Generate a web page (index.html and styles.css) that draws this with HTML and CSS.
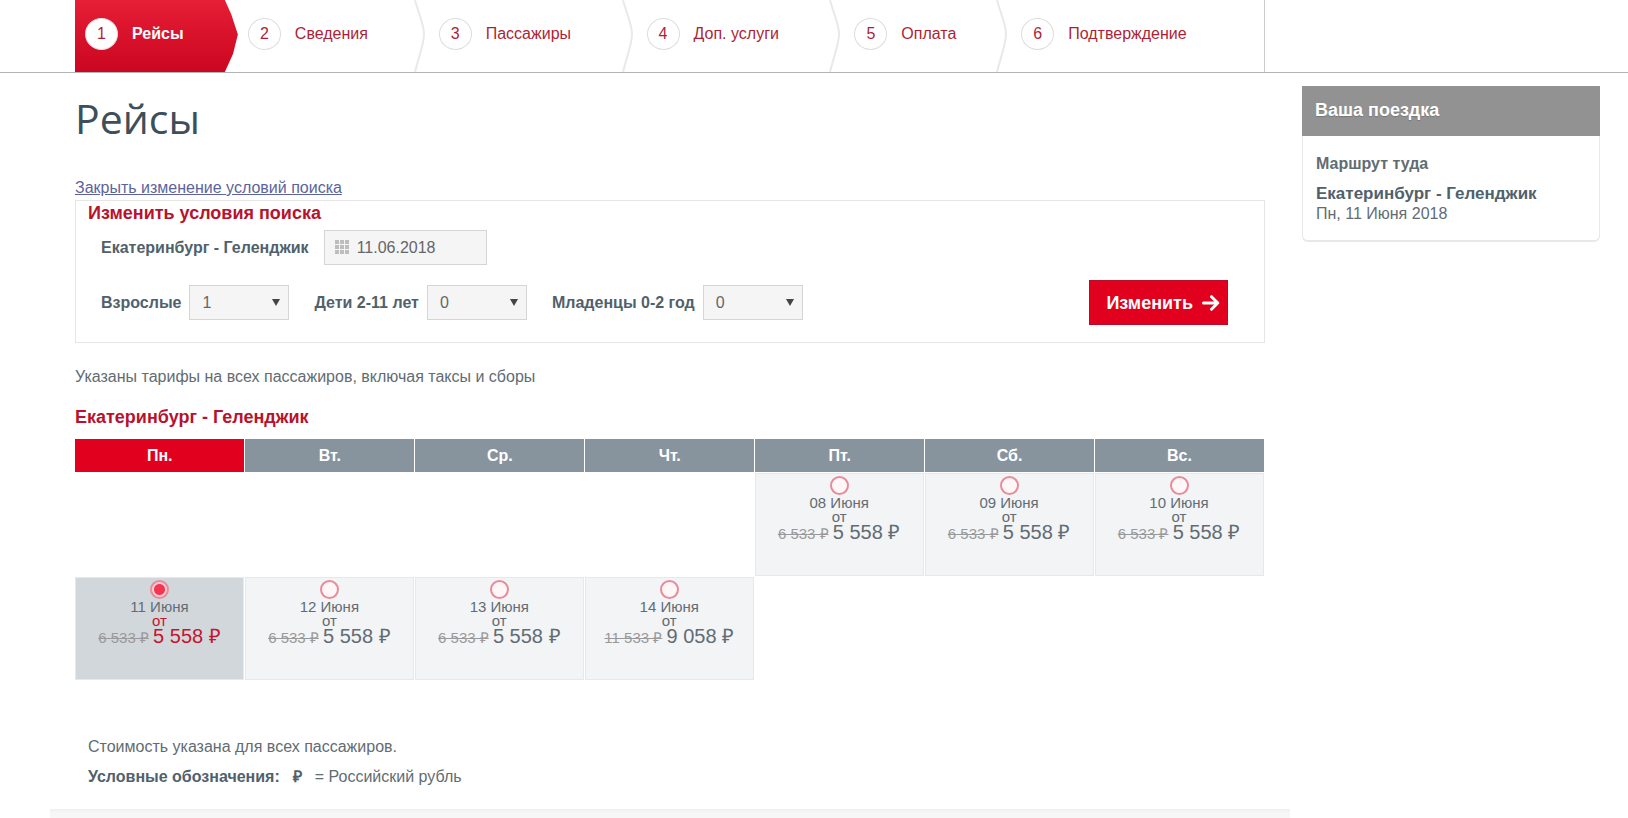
FILE: index.html
```html
<!DOCTYPE html>
<html lang="ru">
<head>
<meta charset="utf-8">
<meta name="viewport" content="width=device-width, initial-scale=1">
<title>Рейсы</title>
<link rel="stylesheet" href="styles.css">
</head>
<body>
<header class="topbar">
  <ol class="steps">
    <li class="step step-active"><span class="step-num">1</span><span class="step-name">Рейсы</span></li>
    <li class="step"><span class="step-num">2</span><span class="step-name">Сведения</span><svg class="chevron" viewBox="0 0 12 72" preserveAspectRatio="none"><path d="M1 0C4 12 10 24 10 34S5 56 1 72"/></svg></li>
    <li class="step step-later"><span class="step-num">3</span><span class="step-name">Пассажиры</span><svg class="chevron" viewBox="0 0 12 72" preserveAspectRatio="none"><path d="M1 0C4 12 10 24 10 34S5 56 1 72"/></svg></li>
    <li class="step step-later"><span class="step-num">4</span><span class="step-name">Доп. услуги</span><svg class="chevron" viewBox="0 0 12 72" preserveAspectRatio="none"><path d="M1 0C4 12 10 24 10 34S5 56 1 72"/></svg></li>
    <li class="step step-later"><span class="step-num">5</span><span class="step-name">Оплата</span><svg class="chevron" viewBox="0 0 12 72" preserveAspectRatio="none"><path d="M1 0C4 12 10 24 10 34S5 56 1 72"/></svg></li>
    <li class="step step-later"><span class="step-num">6</span><span class="step-name">Подтверждение</span></li>
  </ol>
</header>
<div class="page">
  <main class="content">
    <h1 class="title">Рейсы</h1>
    <a class="toggle" href="#search">Закрыть изменение условий поиска</a>
    <form class="search" id="search">
      <h2 class="heading search-title">Изменить условия поиска</h2>
      <div class="row">
        <label class="label" for="date">Екатеринбург - Геленджик</label>
        <span class="date-field">
          <svg class="date-icon" viewBox="0 0 14 14"><path d="M0 0h4v4H0zM5 0h4v4H5zM10 0h4v4h-4zM0 5h4v4H0zM5 5h4v4H5zM10 5h4v4h-4zM0 10h4v4H0zM5 10h4v4H5zM10 10h4v4h-4z"/></svg>
          <input class="control date" id="date" type="text" value="11.06.2018">
        </span>
      </div>
      <div class="row row-passengers">
        <div class="group">
          <label class="label" for="adults">Взрослые</label>
          <span class="select-field"><select class="control select" id="adults"><option>1</option><option>2</option><option>3</option></select></span>
        </div>
        <div class="group">
          <label class="label" for="children">Дети 2-11 лет</label>
          <span class="select-field"><select class="control select" id="children"><option>0</option><option>1</option><option>2</option></select></span>
        </div>
        <div class="group">
          <label class="label" for="infants">Младенцы 0-2 год</label>
          <span class="select-field"><select class="control select" id="infants"><option>0</option><option>1</option></select></span>
        </div>
        <button class="submit" type="button">Изменить<svg class="arrow" viewBox="0 0 18 16"><path d="M1.500 8h14M9.500 1.700 15.800 8l-6.300 6.300"/></svg></button>
      </div>
    </form>
    <p class="note">Указаны тарифы на всех пассажиров, включая таксы и сборы</p>
    <h2 class="heading">Екатеринбург - Геленджик</h2>
    <table class="calendar">
      <thead>
        <tr><th class="today">Пн.</th><th>Вт.</th><th>Ср.</th><th>Чт.</th><th>Пт.</th><th>Сб.</th><th>Вс.</th></tr>
      </thead>
      <tbody>
        <tr>
          <td></td><td></td><td></td><td></td>
          <td><label class="day"><input class="radio" type="radio" name="day"><span class="date-text">08 Июня</span><span class="from">от</span><span class="fare"><s class="old">6 533 ₽</s> <span class="price">5 558 ₽</span></span></label></td>
          <td><label class="day"><input class="radio" type="radio" name="day"><span class="date-text">09 Июня</span><span class="from">от</span><span class="fare"><s class="old">6 533 ₽</s> <span class="price">5 558 ₽</span></span></label></td>
          <td><label class="day"><input class="radio" type="radio" name="day"><span class="date-text">10 Июня</span><span class="from">от</span><span class="fare"><s class="old">6 533 ₽</s> <span class="price">5 558 ₽</span></span></label></td>
        </tr>
        <tr>
          <td><label class="day day-selected"><input class="radio" type="radio" name="day" checked><span class="date-text">11 Июня</span><span class="from">от</span><span class="fare"><s class="old">6 533 ₽</s> <span class="price">5 558 ₽</span></span></label></td>
          <td><label class="day"><input class="radio" type="radio" name="day"><span class="date-text">12 Июня</span><span class="from">от</span><span class="fare"><s class="old">6 533 ₽</s> <span class="price">5 558 ₽</span></span></label></td>
          <td><label class="day"><input class="radio" type="radio" name="day"><span class="date-text">13 Июня</span><span class="from">от</span><span class="fare"><s class="old">6 533 ₽</s> <span class="price">5 558 ₽</span></span></label></td>
          <td><label class="day"><input class="radio" type="radio" name="day"><span class="date-text">14 Июня</span><span class="from">от</span><span class="fare"><s class="old">11 533 ₽</s> <span class="price">9 058 ₽</span></span></label></td>
          <td></td><td></td><td></td>
        </tr>
      </tbody>
    </table>
    <div class="legend">
      <p>Стоимость указана для всех пассажиров.</p>
      <p class="legend-row"><strong>Условные обозначения:</strong><strong>₽</strong><span>= Российский рубль</span></p>
    </div>
    <div class="divider"></div>
  </main>
  <aside class="trip">
    <h2 class="trip-head">Ваша поездка</h2>
    <div class="trip-body">
      <h3 class="trip-label">Маршрут туда</h3>
      <p class="trip-route">Екатеринбург - Геленджик</p>
      <p>Пн, 11 Июня 2018</p>
    </div>
  </aside>
</div>
</body>
</html>
```
FILE: styles.css
```css
* { box-sizing: border-box; }
body { margin: 0; background: #fff; color: #626c73; font: 16px/20px "Liberation Sans", Arial, sans-serif; }
h1, h2, h3, p, ol { margin: 0; padding: 0; }

.topbar { padding: 0 363px 0 75px; border-bottom: 1px solid #b4b4b4; }
.steps { display: grid; grid-template-columns: 163fr 188fr 208fr 208fr 167fr 256fr; height: 72px; list-style: none; border-right: 1px solid #ccc; }
.step { position: relative; display: flex; align-items: center; gap: 14px; padding: 0 0 4px 10px; color: #ad1f36; white-space: nowrap; }
.step-later { padding-left: 13px; }
.step-num { display: grid; place-items: center; width: 33px; height: 32px; border: 1px solid #ddd; border-radius: 50%; background: #fff; }
.step-active { background: linear-gradient(#e61e36, #cb0620); clip-path: polygon(0 0, 92% 0, 96% 20%, 100% 48%, 97% 75%, 92% 100%, 0 100%); }
.step-active .step-name { color: #fff; font-weight: bold; }
.chevron { position: absolute; right: 0; top: 0; width: 12px; height: 72px; fill: none; stroke: #e9e9e9; stroke-width: 2; }

.page { display: grid; grid-template-columns: minmax(0, 1fr) 298px; gap: 37px; align-items: start; padding: 0 28px 0 75px; }
.title { margin: 15px 0 30px; color: #3c4f5a; font: 41px/60px "Open Sans", "Noto Sans", sans-serif; }
.toggle { display: block; width: max-content; margin-bottom: 2px; color: #5b649c; }
.heading { color: #b8122c; font-size: 18px; line-height: 24px; }

.search { height: 143px; padding: 0 36px 0 25px; border: 1px solid #e6e6e6; }
.search-title { margin-left: -13px; }
.row { display: flex; align-items: center; gap: 15px; margin-top: 5px; }
.row-passengers { gap: 25px; margin-top: 15px; }
.group { display: flex; align-items: center; gap: 8px; }
.label { color: #51616b; font-weight: bold; }
.control { height: 35px; border: 1px solid #d3d6d9; border-radius: 0; background: #f5f5f6; color: #666; font: inherit; appearance: none; }
.date-field, .select-field { position: relative; display: flex; }
.date { width: 163px; padding: 0 0 0 32px; }
.date-icon { position: absolute; left: 11px; top: 10px; width: 14px; height: 14px; fill: #bdbdbd; }
.select { width: 100px; padding: 0 12px; }
.select-field::after { content: ""; position: absolute; right: 9px; top: 14px; border: solid transparent; border-width: 7px 4px 0; border-top-color: #444; pointer-events: none; }
.submit { display: flex; align-items: center; gap: 9px; height: 45px; margin-left: auto; padding: 0 7px 0 16px; border: 1px solid #b90c29; background: #e2001f; color: #fff; font: bold 18px/20px "Liberation Sans", Arial, sans-serif; }
.arrow { width: 18px; height: 16px; fill: none; stroke: #fff; stroke-width: 3; stroke-linecap: round; stroke-linejoin: round; }

.note { margin: 24px 0 18px; }
.calendar { width: 100%; margin-top: 10px; border-collapse: collapse; table-layout: fixed; }
.calendar th { height: 33px; padding: 0; border-right: 1px solid #fff; background: #87949d; color: #fff; }
.calendar th.today { background: #e2001f; }
.calendar td { height: 104px; padding: 1px 1px 0 0; }
.day { display: flex; flex-direction: column; align-items: center; height: 103px; padding-top: 2px; border: 1px solid #e6e9eb; background: #f2f4f6; font-size: 15px; line-height: 14px; }
.radio { flex: none; width: 19px; height: 19px; margin: 0; border: 2px solid #e88b9b; border-radius: 50%; background: #fff6f7; appearance: none; }
.radio:checked { background: radial-gradient(circle, #f53650 5px, #f8cdd3 6px); }
.date-text { line-height: 15px; }
.fare { line-height: 17px; white-space: nowrap; }
.old { color: #999; }
.price { font-size: 20px; }
.day-selected { background: #d2d7dc; }
.day-selected .from, .day-selected .price { color: #c4142f; }

.legend { display: grid; gap: 10px; margin-top: 57px; padding-left: 13px; }
.legend-row { display: flex; gap: 13px; }
.legend-row strong { color: #51616b; }
.divider { height: 10px; margin: 22px -25px 0; background: linear-gradient(#efefef, #f7f7f7 4px); }

.trip { margin-top: 13px; }
.trip-head { padding: 14px 13px 16px; background: #929292; color: #fff; font-size: 18px; line-height: 20px; text-shadow: 0 1px 1px #777; }
.trip-body { padding: 18px 13px 16px; border: 1px solid #e8e8e8; border-top: 0; border-bottom-width: 2px; border-radius: 0 0 6px 6px; }
.trip-label { margin-bottom: 10px; font-size: 16px; }
.trip-route { color: #51616b; font-size: 17px; font-weight: bold; }
```
